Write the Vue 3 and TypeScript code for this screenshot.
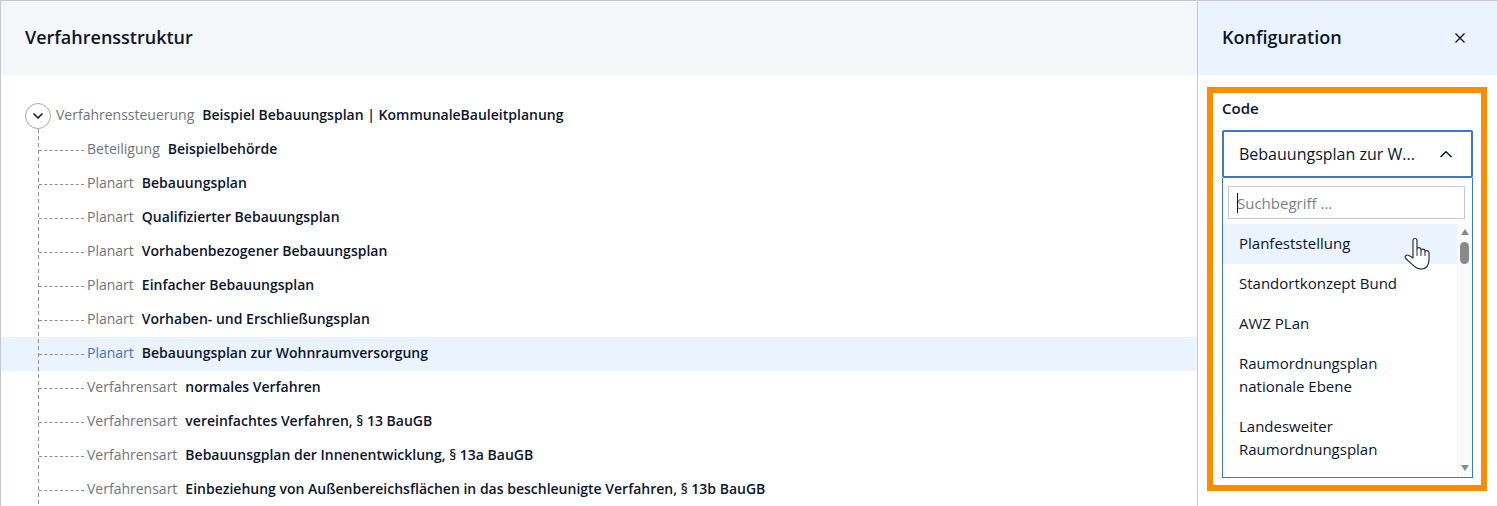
<template>
  <div class="page">
    <section class="tree-pane">
      <header class="pane-head tree-head">
        <h2>Verfahrensstruktur</h2>
      </header>
      <div class="tree">
        <div class="row root">
          <button class="toggle">
            <svg width="12" height="8" viewBox="0 0 12 8"><path d="M1.500 1.500 6 6l4.500-4.500" fill="none" stroke="#0b1530" stroke-width="1.500" /></svg>
          </button>
          <span class="kind">Verfahrenssteuerung</span>
          <span class="name">Beispiel Bebauungsplan | KommunaleBauleitplanung</span>
        </div>
        <div v-for="(n, i) in nodes" :key="i" class="row child" :class="{ selected: n.selected }">
          <span class="dash"></span>
          <span class="kind">{{ n.kind }}</span>
          <span class="name">{{ n.name }}</span>
        </div>
      </div>
    </section>

    <aside class="config-pane">
      <header class="pane-head config-head">
        <h2>Konfiguration</h2>
        <svg class="close" width="12" height="12" viewBox="0 0 12 12"><path d="M1.500 1.500l9 9M10.500 1.500l-9 9" stroke="#0b1530" stroke-width="1.400" /></svg>
      </header>
      <div class="highlight">
        <label class="field-label">Code</label>
        <div class="select">
          <span class="select-value">Bebauungsplan zur W...</span>
          <svg width="14" height="9" viewBox="0 0 14 9"><path d="M1.500 7 7 1.800 12.500 7" fill="none" stroke="#0b1530" stroke-width="1.500" /></svg>
        </div>
        <div class="dropdown">
          <div class="search">
            <span class="caret"></span>
            <span class="placeholder">Suchbegriff ...</span>
          </div>
          <div class="list-wrap">
            <ul class="options">
              <li v-for="(o, i) in options" :key="o" :class="{ hover: i === 0 }">{{ o }}</li>
            </ul>
            <div class="scrollbar">
              <span class="arrow up"></span>
              <span class="thumb"></span>
              <span class="arrow down"></span>
            </div>
            <svg class="cursor" width="27" height="34" viewBox="0 0 27 34">
              <path d="M9 21V3.500C9 .8 13 .8 13 3.500V12C13 10 17 10 17 12.500V14C17 11.500 21 11.500 21 14V15C21 13 25 13 25 15.500V22C25 27 23 31.500 18 32C12 32.500 8 27 1.800 21.500C.3 19.500 2 17 5 18.500Z" fill="#fff" stroke="#2a3040" stroke-width="1.200" stroke-linejoin="round" />
              <path d="M13 12v7M17 14v5M21 15v4" fill="none" stroke="#2a3040" stroke-width="1" />
            </svg>
          </div>
        </div>
      </div>
    </aside>
  </div>
</template>

<script setup lang="ts">
interface TreeNode { kind: string; name: string; selected?: boolean }

const nodes: TreeNode[] = [
  { kind: 'Beteiligung', name: 'Beispielbehörde' },
  { kind: 'Planart', name: 'Bebauungsplan' },
  { kind: 'Planart', name: 'Qualifizierter Bebauungsplan' },
  { kind: 'Planart', name: 'Vorhabenbezogener Bebauungsplan' },
  { kind: 'Planart', name: 'Einfacher Bebauungsplan' },
  { kind: 'Planart', name: 'Vorhaben- und Erschließungsplan' },
  { kind: 'Planart', name: 'Bebauungsplan zur Wohnraumversorgung', selected: true },
  { kind: 'Verfahrensart', name: 'normales Verfahren' },
  { kind: 'Verfahrensart', name: 'vereinfachtes Verfahren, § 13 BauGB' },
  { kind: 'Verfahrensart', name: 'Bebauunsgplan der Innenentwicklung, § 13a BauGB' },
  { kind: 'Verfahrensart', name: 'Einbeziehung von Außenbereichsflächen in das beschleunigte Verfahren, § 13b BauGB' },
]

const options = [
  'Planfeststellung',
  'Standortkonzept Bund',
  'AWZ PLan',
  'Raumordnungsplan nationale Ebene',
  'Landesweiter Raumordnungsplan',
]
</script>

<style>
html, body { margin: 0; background: #fff; overflow: hidden; }
</style>

<style scoped>
.page {
  display: flex; width: 1497px; height: 506px; box-sizing: border-box; overflow: hidden;
  border-top: 1px solid #c8c9cc; border-left: 1px solid #c8c9cc;
  font-family: "Open Sans", "Liberation Sans", sans-serif; color: #0b1530; background: #fff;
}
.tree-pane { width: 1196px; flex-shrink: 0; }
.config-pane { flex: 1; border-left: 1px solid #c8c9cc; }
.pane-head { height: 74px; display: flex; align-items: center; justify-content: space-between; padding: 0 24px; }
.pane-head h2 { margin: 0 0 2px; font-size: 18px; font-weight: 600; }
.tree-head { background: #f5f6f8; }
.config-head { background: #ebf3fe; padding-right: 31px; }
.close { display: block; }

.tree { padding-top: 24px; position: relative; }
.tree::before {
  content: ''; position: absolute; left: 37px; top: 54px; bottom: 0; width: 1px;
  background: repeating-linear-gradient(#8f9094 0 4px, transparent 4px 7px);
}
.row { height: 34px; display: flex; align-items: center; font-size: 14px; white-space: nowrap; }
.row .kind, .row .name { margin-bottom: 4px; }
.root { padding-left: 24px; }
.toggle {
  width: 26px; height: 26px; padding: 0; margin-right: 5px; box-sizing: border-box; border-radius: 50%;
  border: 1px solid #a8a9ad; background: #fff; display: flex; align-items: center; justify-content: center;
}
.child { padding-left: 38px; }
.dash { width: 45px; height: 0; border-top: 1px dashed #8f9094; margin-right: 3px; }
.kind { color: #6f7480; margin-right: 8px; }
.name { font-weight: 600; }
.selected { background: #ebf3fe; }
.selected .kind { color: #3a76d2; }

.highlight {
  margin: 12px 10px 0 9px; height: 404px; box-sizing: border-box;
  border: 6px solid #ff8c00; padding: 6px 8px 0 9px;
}
.field-label { display: block; font-size: 15px; font-weight: 600; line-height: 19px; margin-bottom: 12px; }
.select {
  height: 48px; box-sizing: border-box; border: 2px solid #3a76d2; border-radius: 2px;
  display: flex; align-items: center; justify-content: space-between; padding: 0 18px 0 15px; font-size: 16px;
}
.dropdown {
  height: 300px; box-sizing: border-box; border: 1px solid #3a76d2; border-top: 0;
  display: flex; flex-direction: column;
}
.search {
  margin: 8px 7px 5px 5px; height: 33px; flex-shrink: 0; box-sizing: border-box; border: 1px solid #c8c9cc;
  display: flex; align-items: center; padding-left: 8px; font-size: 15px; position: relative;
}
.caret { position: absolute; left: 8px; top: 6px; height: 20px; border-left: 1px solid #0b1530; }
.placeholder { color: #7b7f8a; }
.list-wrap { flex: 1; min-height: 0; display: flex; position: relative; }
.options { list-style: none; margin: 0; padding: 0; flex: 1; font-size: 15px; line-height: 23px; }
.options li { padding: 8px 40px 9px 16px; }
.hover { background: #ebf3fe; }
.scrollbar {
  width: 15px; flex-shrink: 0; background: #fafafa; position: relative;
  display: flex; flex-direction: column; align-items: center;
}
.arrow { width: 0; height: 0; border-left: 4px solid transparent; border-right: 4px solid transparent; }
.arrow.up { border-bottom: 6px solid #8a8a8a; margin-top: 5px; }
.arrow.down { border-top: 6px solid #8a8a8a; margin-top: auto; margin-bottom: 6px; }
.thumb { width: 9px; height: 22px; border-radius: 5px; background: #8a8a8a; margin-top: 7px; }
.cursor { position: absolute; left: 181px; top: 13px; }
</style>
